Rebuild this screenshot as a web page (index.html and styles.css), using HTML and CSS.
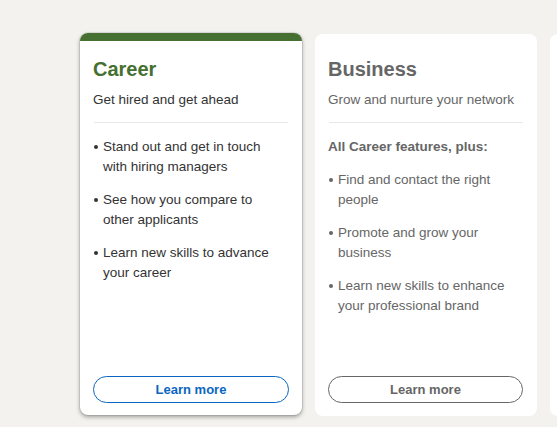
FILE: index.html
```html
<!DOCTYPE html>
<html>
<head>
<meta charset="utf-8">
<link rel="stylesheet" href="styles.css">
</head>
<body>
<div class="row">
  <div class="card card-active">
    <div class="bar"></div>
    <div class="body">
      <h2 class="title title-green">Career</h2>
      <p class="sub">Get hired and get ahead</p>
      <hr class="rule">
      <ul class="list">
        <li>Stand out and get in touch with hiring managers</li>
        <li>See how you compare to other applicants</li>
        <li>Learn new skills to advance your career</li>
      </ul>
      <button class="btn btn-blue">Learn more</button>
    </div>
  </div>
  <div class="card card-muted">
    <div class="body body-plain">
      <h2 class="title title-gray">Business</h2>
      <p class="sub">Grow and nurture your network</p>
      <hr class="rule">
      <p class="plus">All Career features, plus:</p>
      <ul class="list">
        <li>Find and contact the right people</li>
        <li>Promote and grow your business</li>
        <li>Learn new skills to enhance your professional brand</li>
      </ul>
      <button class="btn btn-gray">Learn more</button>
    </div>
  </div>
  <div class="card card-muted card-edge"></div>
</div>
</body>
</html>
```
FILE: styles.css
```css
* { box-sizing: border-box; }
html, body { margin: 0; padding: 0; }
body {
  background: #f3f2ef;
  font-family: "Liberation Sans", Arial, sans-serif;
  width: 557px;
  height: 427px;
  overflow: hidden;
}
.row {
  display: flex;
  gap: 13px;
  padding: 33px 0 0 80px;
  width: 557px;
  height: 427px;
  overflow: hidden;
}
.card {
  flex: 0 0 222px;
  width: 222px;
  height: 382px;
  background: #fff;
  border-radius: 8px;
  display: flex;
  flex-direction: column;
  overflow: hidden;
}
.card-active {
  box-shadow: 0 2px 4px rgba(0,0,0,0.35), 0 0 0 1px rgba(0,0,0,0.08);
}
.card-muted {
  height: 382px;
  margin-top: 1px;
}
.card-edge { flex: 0 0 8px; width: 8px; border-radius: 8px 0 0 8px; }
.bar {
  height: 8px;
  background: #467031;
  flex: 0 0 auto;
}
.body {
  flex: 1;
  display: flex;
  flex-direction: column;
  padding: 16px 13px 12px 13px;
}
.body-plain { padding-top: 23px; padding-bottom: 13px; }
.title {
  margin: 0;
  font-size: 20px;
  line-height: 24px;
  font-weight: 700;
}
.title-green { color: #467031; }
.title-gray { color: #666666; }
.sub {
  margin: 9px 0 0;
  font-size: 13.5px;
  line-height: 20px;
  color: #333;
}
.card-muted .sub { color: #666; }
.rule {
  border: 0;
  border-top: 1px solid #e8e8e8;
  margin: 12px 1px 14px;
}
.plus {
  margin: 0 0 13px;
  font-size: 13.5px;
  line-height: 20px;
  font-weight: 700;
  color: #666;
}
.list {
  margin: 0;
  padding: 0 10px 0 10px;
  list-style: none;
  font-size: 13.5px;
  line-height: 20px;
  color: #333;
}
.card-muted .list { color: #666; }
.list li {
  position: relative;
  margin-bottom: 13px;
}
.list li::before {
  content: "";
  position: absolute;
  left: -9px;
  top: 8px;
  width: 4px;
  height: 4px;
  border-radius: 50%;
  background: currentColor;
}
.btn {
  margin-top: auto;
  height: 27px;
  border-radius: 14px;
  background: #fff;
  font-family: inherit;
  font-size: 13px;
  font-weight: 700;
  width: 196px;
  cursor: pointer;
}
.btn-blue { border: 1px solid #0a66c2; color: #0a66c2; }
.btn-gray { border: 1px solid #666; color: #666; width: 195px; }
```
